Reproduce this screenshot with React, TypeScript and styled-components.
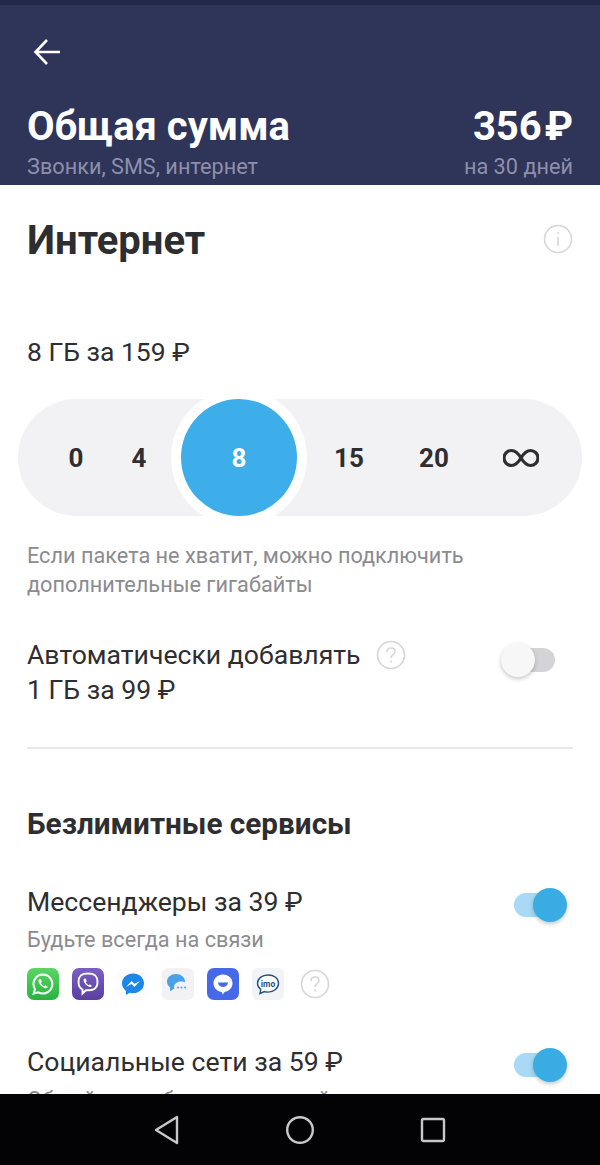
import React from "react";
import styled, { createGlobalStyle } from "styled-components";

const Global = createGlobalStyle`
  html, body { margin: 0; padding: 0; background: #fff; }
  body { font-family: Roboto, "Noto Sans", sans-serif; }
  * { box-sizing: border-box; }
`;
const Page = styled.div`
  width: 600px; height: 1165px; display: flex; flex-direction: column; overflow: hidden; background: #fff;
`;
const StatusStrip = styled.div`height: 5px; background: #232848; flex: none;`;
const Header = styled.header`
  flex: none; height: 180px; background: #2f3459; padding: 30px 27px 0; color: #fff; overflow: hidden;
`;
const BackButton = styled.div`height: 34px; display: flex; align-items: center; margin-left: 6px;`;
const Summary = styled.div`
  display: flex; justify-content: space-between; margin-top: 36px;
`;
const SummaryCol = styled.div<{ $right?: boolean }>`
  display: flex; flex-direction: column; align-items: ${p => (p.$right ? "flex-end" : "flex-start")};
`;
const SummaryTitle = styled.div`font-size: 40px; font-weight: 700; line-height: 44px; white-space: nowrap;`;
const Currency = styled.span`margin-left: 3px;`;
const SummarySub = styled.div`font-size: 21.7px; line-height: 24px; color: #8d90aa; margin-top: 6px; white-space: nowrap;`;
const Body = styled.main`
  flex: 1; min-height: 0; overflow: hidden; padding: 0 27px;
`;
const SectionHead = styled.div`
  display: flex; justify-content: space-between; align-items: center; margin-top: 32px; height: 48px;
`;
const H1 = styled.h1`margin: 0; font-size: 40px; font-weight: 700; color: #2e2e31; line-height: 48px;`;
const Amount = styled.div`font-size: 26.5px; line-height: 30px; color: #2e2e31; margin-top: 72px;`;
const Track = styled.div`
  margin: 32px -9px 0; height: 117px; border-radius: 59px; background: #f2f2f4;
  display: grid; grid-template-columns: 60px 66px 134px 86px 84px 90px; padding-left: 28px; align-items: center;
`;
const Tick = styled.div`
  display: flex; justify-content: center; align-items: center;
  font-size: 26px; font-weight: 700; color: #2e2e31;
`;
const Thumb = styled.div`
  width: 116px; height: 117px; border-radius: 50%; background: #3daee9; color: #fff;
  box-shadow: 0 0 0 10px #fff; display: flex; align-items: center; justify-content: center;
  font-size: 26px; font-weight: 700; position: relative;
`;
const Note = styled.p`
  margin: 25px 0 0; font-size: 21.7px; line-height: 29px; color: #8b8b90;
`;
const Row = styled.div<{ $top: number }>`
  display: flex; justify-content: space-between; margin-top: ${p => p.$top}px;
`;
const RowTitle = styled.div`font-size: 26.6px; line-height: 35px; color: #2e2e31; display: flex; align-items: center; gap: 15px; white-space: nowrap;`;
const Divider = styled.hr`margin: 40px 0 0; border: 0; height: 2px; background: #e9e9eb;`;
const H2 = styled.h2`margin: 57px 0 0; font-size: 29.7px; line-height: 36px; font-weight: 700; color: #2e2e31; white-space: nowrap;`;
const RowSub = styled.div`font-size: 21.7px; line-height: 26px; color: #8b8b90; margin-top: 8px; white-space: nowrap;`;
const Toggle = styled.div<{ $on?: boolean }>`
  position: relative; flex: none; width: ${p => (p.$on ? "53px" : "54px")}; height: 34px;
  margin: ${p => (p.$on ? "4px 6px 0 0" : "6px 18px 0 0")};
`;
const ToggleTrack = styled.span<{ $on?: boolean }>`
  position: absolute; top: 5px; height: 24px; border-radius: 12px;
  left: ${p => (p.$on ? "0" : "14px")}; width: 40px;
  background: ${p => (p.$on ? "#a9d9f4" : "#d4d4d6")};
`;
const ToggleKnob = styled.span<{ $on?: boolean }>`
  position: absolute; top: 0; width: 34px; height: 34px; border-radius: 50%;
  left: ${p => (p.$on ? "19px" : "0")};
  background: ${p => (p.$on ? "#3aabe3" : "#f7f7f8")};
  box-shadow: 0 2px 4px rgba(0,0,0,.22);
`;
const AppIcons = styled.div`display: flex; align-items: center; gap: 13px; margin-top: 15px;`;
const AppIcon = styled.svg`width: 32px; height: 32px; display: block; flex: none;`;
const Help = styled.svg`width: 30px; height: 30px; display: block; flex: none;`;
const HelpSlot = styled.div`margin-left: 3px;`;
const NavBar = styled.nav`
  flex: none; height: 71px; background: #030204; display: flex; justify-content: center; align-items: center; gap: 0;
`;
const NavSlot = styled.div`width: 133px; display: flex; justify-content: center; align-items: center;`;

const Question = () => (
  <Help viewBox="0 0 30 30">
    <circle cx="15" cy="15" r="13.5" fill="none" stroke="#d6d6d8" strokeWidth="1.6" />
    <path d="M11 12c0-2.6 1.8-4 4-4s4 1.4 4 3.6c0 3-4 3-4 6.4" fill="none" stroke="#d6d6d8" strokeWidth="1.6" />
    <circle cx="15" cy="21.6" r="1" fill="#d6d6d8" />
  </Help>
);

const Switch = ({ on }: { on?: boolean }) => (
  <Toggle $on={on}>
    <ToggleTrack $on={on} />
    <ToggleKnob $on={on} />
  </Toggle>
);

export default function App() {
  return (
    <Page>
      <Global />
      <StatusStrip />
      <Header>
        <BackButton>
          <svg width="28" height="28" viewBox="0 0 28 28" fill="none" stroke="#fff" strokeWidth="2.6">
            <path d="M27 14H3M14 2 2.5 14 14 26" />
          </svg>
        </BackButton>
        <Summary>
          <SummaryCol>
            <SummaryTitle>Общая сумма</SummaryTitle>
            <SummarySub>Звонки, SMS, интернет</SummarySub>
          </SummaryCol>
          <SummaryCol $right>
            <SummaryTitle>356<Currency>₽</Currency></SummaryTitle>
            <SummarySub>на 30 дней</SummarySub>
          </SummaryCol>
        </Summary>
      </Header>
      <Body>
        <SectionHead>
          <H1>Интернет</H1>
          <Help viewBox="0 0 30 30" style={{ marginTop: -4 }}>
            <circle cx="15" cy="15" r="13.5" fill="none" stroke="#d6d6d8" strokeWidth="1.6" />
            <path d="M15 13v9" stroke="#d6d6d8" strokeWidth="1.6" />
            <circle cx="15" cy="9" r="1" fill="#d6d6d8" />
          </Help>
        </SectionHead>
        <Amount>8 ГБ за 159 ₽</Amount>
        <Track>
          <Tick>0</Tick>
          <Tick>4</Tick>
          <Tick><Thumb>8</Thumb></Tick>
          <Tick>15</Tick>
          <Tick>20</Tick>
          <Tick>
            <svg width="36" height="20" viewBox="0 0 36 20" fill="none" stroke="#2e2e31" strokeWidth="3.2">
              <path d="M18 10C15 5 12 2.500 8.500 2.500a7.500 7.500 0 0 0 0 15C12 17.500 15 15 18 10s6-7.500 9.500-7.500a7.500 7.500 0 0 1 0 15C24 17.500 21 15 18 10Z" />
            </svg>
          </Tick>
        </Track>
        <Note>Если пакета не хватит, можно подключить<br />дополнительные гигабайты</Note>
        <Row $top={38}>
          <div>
            <RowTitle>Автоматически добавлять <Question /></RowTitle>
            <RowTitle>1 ГБ за 99 ₽</RowTitle>
          </div>
          <Switch />
        </Row>
        <Divider />
        <H2>Безлимитные сервисы</H2>
        <Row $top={42}>
          <div>
            <RowTitle>Мессенджеры за 39 ₽</RowTitle>
            <RowSub>Будьте всегда на связи</RowSub>
          </div>
          <Switch on />
        </Row>
        <AppIcons>
          <AppIcon viewBox="0 0 32 32">
            <defs><linearGradient id="wa" x1="0" y1="0" x2="0" y2="1"><stop offset="0" stopColor="#5bd566" /><stop offset="1" stopColor="#27b33f" /></linearGradient></defs>
            <rect width="32" height="32" rx="7" fill="url(#wa)" />
            <path d="M16 6.500a9.500 9.500 0 0 0-8 14.600L6.700 25.500l4.500-1.200A9.500 9.500 0 1 0 16 6.500Z" fill="none" stroke="#fff" strokeWidth="2" />
            <path d="M12.500 11c-1 .6-1.300 2-.6 3.600 1 2.300 3 4.300 5.500 5.300 1.600.6 2.800.2 3.500-.9l-2.400-1.700-1.100 1c-1.500-.6-2.800-1.900-3.500-3.400l.9-1.200L13.800 11Z" fill="#fff" />
          </AppIcon>
          <AppIcon viewBox="0 0 32 32">
            <defs><linearGradient id="vb" x1="0" y1="0" x2="0" y2="1"><stop offset="0" stopColor="#7b5fc7" /><stop offset="1" stopColor="#5a3f9f" /></linearGradient></defs>
            <rect width="32" height="32" rx="7" fill="url(#vb)" />
            <path d="M16 5.500c-5 0-9.500 1-9.500 8.500 0 4 1.500 6.300 4 7.500v4l3.500-3.300c6 .5 11.500-.7 11.500-8.200S21 5.500 16 5.500Z" fill="none" stroke="#fff" strokeWidth="1.900" />
            <path d="M12.500 10.500c-1 .6-1.200 1.800-.6 3.200 1 2.300 2.700 4 5 5 1.400.6 2.600.3 3.100-.8l-2.200-1.600-1 .9c-1.300-.6-2.300-1.700-3-3l.9-1L13.700 10.500Z" fill="#fff" />
          </AppIcon>
          <AppIcon viewBox="0 0 32 32">
            <rect width="32" height="32" rx="7" fill="#fcfcfd" />
            <path d="M16 5.500c-6 0-11 4.300-11 9.800 0 3.100 1.500 5.800 4 7.600v4l3.700-2.100c1 .3 2.200.5 3.300.5 6 0 11-4.400 11-10S22 5.500 16 5.500Z" fill="#1c86ea" />
            <path d="m9 19 5.600-6.100 2.900 2.900 5.500-2.900-5.600 6.100-3-3Z" fill="#fff" />
          </AppIcon>
          <AppIcon viewBox="0 0 32 32">
            <rect width="32" height="32" rx="6" fill="#f2f2f4" />
            <path d="M14 6c-5 0-9 3.200-9 7.500 0 2.300 1.100 4.300 3 5.700v4l3.500-2.300c1 .2 1.600.2 2.500.2 5 0 9-3.400 9-7.600S19 6 14 6Z" fill="#4ba1e8" />
            <path d="M19 13.500c-4 0-7 2.500-7 5.800s3 5.700 7 5.700c.8 0 1.400 0 2.100-.2l3.400 2v-3.500c1.600-1 2.500-2.400 2.500-4 0-3.300-3.600-5.800-8-5.800Z" fill="#f2f2f4" />
            <circle cx="16" cy="19.500" r="1" fill="#4ba1e8" /><circle cx="19.500" cy="19.500" r="1" fill="#4ba1e8" /><circle cx="23" cy="19.500" r="1" fill="#4ba1e8" />
          </AppIcon>
          <AppIcon viewBox="0 0 32 32">
            <rect width="32" height="32" rx="7" fill="#4569e8" />
            <path d="M16 6.500c-5.300 0-9.500 3.800-9.500 8.800 0 4.500 3.400 8 8 8.600l1.500 2.600 1.500-2.600c4.600-.6 8-4.100 8-8.600 0-5-4.200-8.800-9.500-8.800Z" fill="#fff" />
            <path d="M11 14.500h10c-.3 2.800-2.400 4.500-5 4.500s-4.700-1.700-5-4.500Z" fill="#4569e8" />
          </AppIcon>
          <AppIcon viewBox="0 0 32 32">
            <rect width="32" height="32" rx="6" fill="#f2f3f6" />
            <path d="M16 7c-6 0-10.500 3.600-10.500 8.300 0 2.500 1.200 4.600 3.300 6.100L8 25.500l4.400-1.900c1.100.3 2.400.5 3.600.5 6 0 10.500-3.800 10.500-8.800S22 7 16 7Z" fill="#fff" stroke="#24517f" strokeWidth="1.400" />
            <text x="16" y="18.500" textAnchor="middle" fontFamily="Roboto, sans-serif" fontSize="8.500" fontWeight="700" fill="#24517f">imo</text>
          </AppIcon>
          <HelpSlot><Question /></HelpSlot>
        </AppIcons>
        <Row $top={44}>
          <div>
            <RowTitle>Социальные сети за 59 ₽</RowTitle>
            <RowSub>Общайтесь с близкими онлайн</RowSub>
          </div>
          <Switch on />
        </Row>
      </Body>
      <NavBar>
        <NavSlot>
          <svg width="26" height="30" viewBox="0 0 26 30" fill="none" stroke="#c8c8c8" strokeWidth="2.400" strokeLinejoin="round">
            <path d="M23 2 2 15l21 13Z" />
          </svg>
        </NavSlot>
        <NavSlot>
          <svg width="30" height="30" viewBox="0 0 30 30" fill="none" stroke="#c8c8c8" strokeWidth="2.400">
            <circle cx="15" cy="15" r="12.800" />
          </svg>
        </NavSlot>
        <NavSlot>
          <svg width="26" height="26" viewBox="0 0 26 26" fill="none" stroke="#c8c8c8" strokeWidth="2.400">
            <rect x="2" y="2" width="22" height="22" rx="1.500" />
          </svg>
        </NavSlot>
      </NavBar>
    </Page>
  );
}
